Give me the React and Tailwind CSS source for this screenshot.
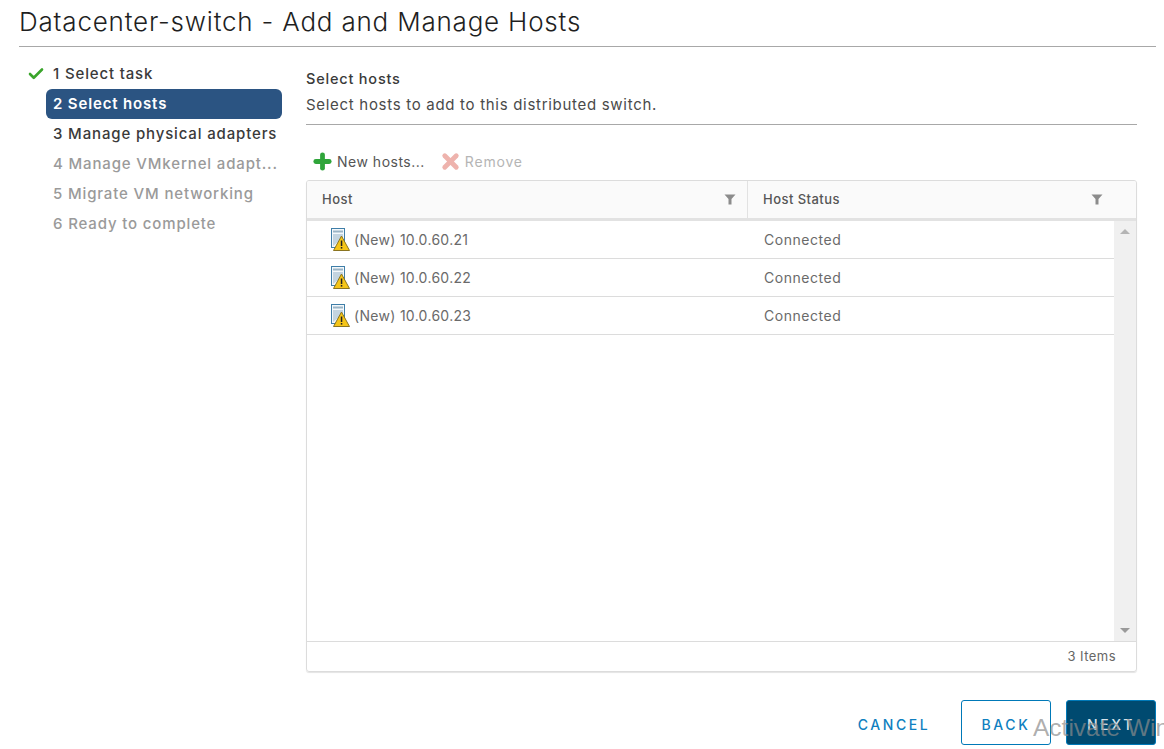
import { Check, Plus, X } from "lucide-react";

const font = { fontFamily: "Inter, 'Liberation Sans', sans-serif" };

function FilterIcon() {
  return (
    <svg width="12" height="11" viewBox="0 0 12 11" className="shrink-0">
      <path d="M0.5 0.5H11.5L7.5 5V10.5H4.5V5Z" fill="#8c8c8c" />
    </svg>
  );
}

function HostIcon() {
  return (
    <svg width="20" height="24" viewBox="0 0 20 24" className="shrink-0">
      <rect x="1.5" y="0.5" width="13" height="19" fill="#f4f8fb" stroke="#3f7ea8" />
      <rect x="3" y="2.5" width="10" height="2" fill="#9ab4c6" />
      <path d="M3 6H13V10L3 18Z" fill="#c3d4e0" />
      <path d="M11.5 8L19.5 22.5H3.5Z" fill="#f5c518" stroke="#8a7420" strokeWidth="1" />
      <rect x="10.8" y="12.5" width="1.5" height="5.5" fill="#222" />
      <rect x="10.8" y="19" width="1.5" height="1.6" fill="#222" />
    </svg>
  );
}

const steps = [
  { label: "1 Select task", cls: "text-[#3a3a3a] font-medium" },
  { label: "2 Select hosts", cls: "text-white font-semibold bg-[#2b5482] rounded-md" },
  { label: "3 Manage physical adapters", cls: "text-[#3a3a3a] font-medium" },
  { label: "4 Manage VMkernel adapt...", cls: "text-[#9a9a9a] font-medium" },
  { label: "5 Migrate VM networking", cls: "text-[#9a9a9a] font-medium" },
  { label: "6 Ready to complete", cls: "text-[#9a9a9a] font-medium" },
];

const hosts = ["10.0.60.21", "10.0.60.22", "10.0.60.23"];

export default function App() {
  return (
    <div className="relative w-[1164px] h-[749px] overflow-hidden bg-white pl-[19px] pr-[8px] flex flex-col" style={font}>
      {/* Title */}
      <div className="h-[47px] shrink-0 border-b border-[#a8a8a8] flex items-center pb-[3px]">
        <h1 className="text-[26px] font-light text-[#1f1f1f] tracking-[0.8px] whitespace-nowrap">Datacenter-switch - Add and Manage Hosts</h1>
      </div>

      <div className="flex-1 flex min-h-0">
        {/* Steps */}
        <div className="w-[263px] shrink-0 pt-[12px] relative">
          <Check className="absolute left-[8px] top-[18px] w-[18px] h-[18px] text-[#3aa52b]" strokeWidth={3.5} />
          {steps.map((s) => (
            <div key={s.label} className={`ml-[27px] w-[236px] h-[30px] pl-[7px] flex items-center text-[15px] tracking-[0.85px] whitespace-nowrap ${s.cls}`}>
              {s.label}
            </div>
          ))}
        </div>

        {/* Main */}
        <div className="flex-1 ml-[24px] mr-[19px] flex flex-col min-w-0">
          <div className="pt-[22px] h-[78px] border-b border-[#a8a8a8] shrink-0">
            <div className="text-[14.5px] font-medium text-[#3a3a3a] tracking-[0.8px] leading-[20px]">Select hosts</div>
            <div className="text-[15px] text-[#4a4a4a] tracking-[0.7px] leading-[31px]">Select hosts to add to this distributed switch.</div>
          </div>

          {/* Toolbar */}
          <div className="h-[55px] shrink-0 flex items-end pb-[7px] pl-[5px] text-[14px] tracking-[0.5px]">
            <div className="flex items-center gap-[3px] text-[#555]">
              <Plus className="w-[23px] h-[23px] text-[#2fa53a]" strokeWidth={5} />
              <span>New hosts...</span>
            </div>
            <div className="flex items-center gap-[3px] ml-[14px] text-[#b5b5b5] tracking-[0.8px]">
              <X className="w-[23px] h-[23px] text-[#eeb3ad]" strokeWidth={5} />
              <span>Remove</span>
            </div>
          </div>

          {/* Grid */}
          <div className="h-[492px] shrink-0 border border-[#dcdcdc] rounded-[3px] flex flex-col overflow-hidden shadow-[0_1px_1px_#e4e4e4]">
            <div className="h-[40px] shrink-0 flex bg-[#fafafa] border-b-[3px] border-[#e2e2e2] text-[13px] font-medium text-[#565656] tracking-[0.45px]">
              <div className="w-[441px] pl-[15px] pr-[11px] border-r border-[#e2e2e2] flex items-center justify-between">
                <span>Host</span>
                <FilterIcon />
              </div>
              <div className="flex-1 pl-[15px] pr-[33px] flex items-center justify-between">
                <span>Host Status</span>
                <FilterIcon />
              </div>
            </div>

            <div className="flex-1 flex min-h-0">
              <div className="flex-1 min-w-0">
                {hosts.map((h) => (
                  <div key={h} className="h-[38px] border-b border-[#dcdcdc] flex items-center text-[14px] text-[#6a6a6a] tracking-[0.3px]">
                    <div className="w-[441px] pl-[23px] flex items-center gap-[4px]">
                      <HostIcon />
                      <span>(New) {h}</span>
                    </div>
                    <div className="pl-[16px] tracking-[0.55px]">Connected</div>
                  </div>
                ))}
              </div>
              {/* Scrollbar */}
              <div className="w-[22px] shrink-0 bg-[#f0f0f0] flex flex-col items-center justify-between py-[8px]">
                <div className="w-0 h-0 border-x-[5px] border-x-transparent border-b-[5px] border-b-[#b4b4b4]" />
                <div className="w-0 h-0 border-x-[5px] border-x-transparent border-t-[5px] border-t-[#9a9a9a]" />
              </div>
            </div>

            <div className="h-[30px] shrink-0 border-t border-[#dcdcdc] flex items-center justify-end pr-[20px] text-[13px] tracking-[0.45px] text-[#666]">
              3 Items
            </div>
          </div>

          <div className="flex-1" />
        </div>
      </div>

      {/* Footer buttons */}
      <div className="h-[49px] shrink-0 pb-[4px] flex items-stretch justify-end text-[14px] font-medium tracking-[2.6px]">
        <button className="w-[90px] mr-[22px] pt-[3px] text-[#0f7fc0]">CANCEL</button>
        <button className="w-[90px] mr-[15px] pt-[3px] border border-[#0079b8] rounded-[3px] text-[#0f7fc0]">BACK</button>
        <button className="w-[90px] pt-[3px] bg-[#004a70] border border-[#0079b8] rounded-[3px] text-[#d5e2ea]">NEXT</button>
      </div>

      {/* Windows activation watermark */}
      <div className="absolute left-[1033px] top-[710px] text-[24.5px] text-[#8c8c8c]/70 whitespace-nowrap" style={{ fontFamily: "'Liberation Sans', sans-serif" }}>
        Activate Windows
      </div>
    </div>
  );
}
